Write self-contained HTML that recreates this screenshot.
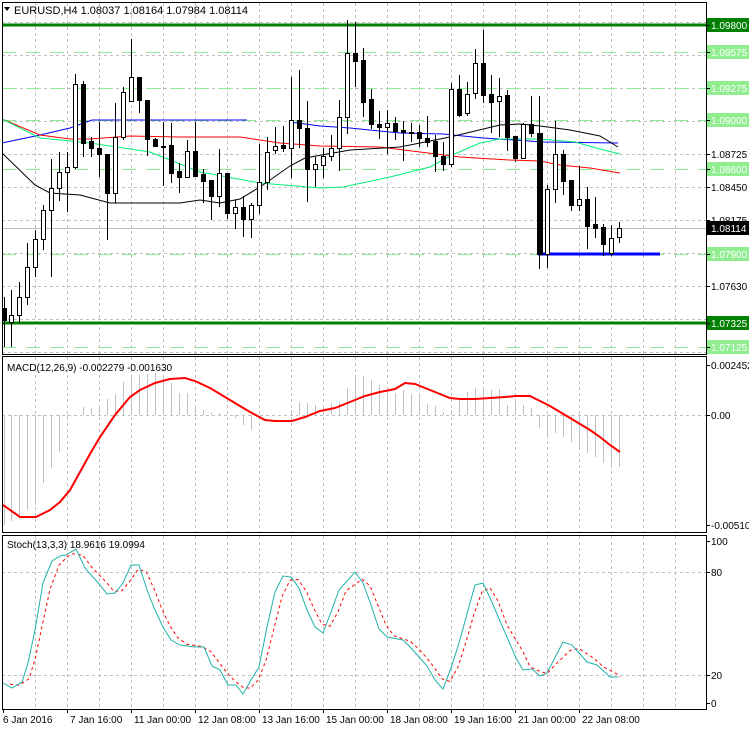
<!DOCTYPE html>
<html><head><meta charset="utf-8"><style>
html,body{margin:0;padding:0;background:#fff;width:749px;height:731px;overflow:hidden}
svg{display:block}
text{font-family:"Liberation Sans",sans-serif;font-size:10px;fill:#000}
</style></head><body>
<svg id="s" width="749" height="731" xmlns="http://www.w3.org/2000/svg">
<rect width="749" height="731" fill="#fff"/>
<g id="grid"></g>
<g id="lines"></g>
<g id="candles"></g>
<g id="ind"></g>
<g id="axis"></g>
<text x="14" y="14" style="font-size:11px">EURUSD,H4  1.08037 1.08164 1.07984 1.08114</text>
<path d="M4 7 L10 7 L7 11 Z" fill="#000"/>
<text x="7" y="371" style="font-size:10px">MACD(12,26,9) -0.002279 -0.001630</text>
<text x="7" y="548" style="font-size:10px">Stoch(13,3,3) 18.9616 19.0994</text>
</svg>
<script>
var NS="http://www.w3.org/2000/svg";
function el(p,t,a){var e=document.createElementNS(NS,t);for(var k in a)e.setAttribute(k,a[k]);document.getElementById(p).appendChild(e);return e;}
function txt(p,x,y,s,fill){var e=el(p,"text",{x:x,y:y});e.textContent=s;if(fill)e.setAttribute("style","fill:"+fill);return e;}
for(var x=35;x<706;x+=32){[[3,354],[357,532],[536,709]].forEach(function(r){el("grid","line",{x1:x+.5,y1:r[0],x2:x+.5,y2:r[1],stroke:"#c0c0c0","stroke-dasharray":"3,3"});});}
[22,55,88,121,154,187,220,253,286,319,352].forEach(function(y){el("grid","line",{x1:2,y1:y+.5,x2:706,y2:y+.5,stroke:"#c0c0c0","stroke-dasharray":"3,3"});});
[415,572,675].forEach(function(y){el("grid","line",{x1:2,y1:y+.5,x2:706,y2:y+.5,stroke:"#c0c0c0","stroke-dasharray":"3,3"});});
[52,88,120,169,254,347].forEach(function(y){el("lines","line",{x1:2,y1:y+.5,x2:706,y2:y+.5,stroke:"#90ee90","stroke-width":1,"stroke-dasharray":"14,10"});});
el("lines","line",{x1:2,y1:228.5,x2:706,y2:228.5,stroke:"#c0c0c0"});
[25,323].forEach(function(y){el("lines","line",{x1:2,y1:y,x2:706,y2:y,stroke:"#008000","stroke-width":3});});
function pl(g,pts,c,w,d){var a={points:pts.map(function(p){return p.join(",")}).join(" "),fill:"none",stroke:c,"stroke-width":w||1};if(d)a["stroke-dasharray"]=d;el(g,"polyline",a);}
pl("lines",[[2,143],[40,135],[70,128],[92,120],[247,120]],"#0000ff");
pl("lines",[[290,122],[320,126],[350,128],[400,133],[443,134],[483,138],[543,142],[618,143]],"#0000ff");
pl("lines",[[2,119],[40,135],[70,139],[90,139],[130,136],[180,137],[240,137],[280,143],[320,146],[380,147],[420,152],[460,157],[510,160],[540,161],[560,165],[590,168],[620,173]],"#ff0000");
pl("lines",[[2,119],[40,138],[90,143],[150,152],[200,172],[260,183],[320,188],[343,187],[390,177],[430,167],[450,156],[480,143],[500,139],[540,139],[575,142],[600,149],[620,154]],"#00ee76");
pl("lines",[[2,153],[35,185],[50,193],[80,195],[110,203],[180,203],[200,200],[220,203],[240,199],[260,187],[290,166],[305,158],[350,150],[400,147],[450,137],[500,125],[520,124],[540,126],[570,130],[600,136],[618,147]],"#000");
el("lines","line",{x1:538,y1:254,x2:660,y2:254,stroke:"#0000ff","stroke-width":3});
var C=[[4,308,320,297,347,0],[11,315,322,290,347,1],[19,297,315,282,323,1],[27,267,297,243,305,1],[35,239,267,230,277,1],[43,210,239,205,250,1],[51,188,210,159,277,1],[59,172,188,152,201,1],[67,167,172,152,212,1],[75,84,167,74,169,1],[83,84,143,81,157,0],[91,141,148,137,157,0],[99,148,154,122,177,0],[107,154,193,154,240,0],[115,137,193,103,203,1],[123,92,137,87,140,1],[131,77,101,39,102,1],[139,77,100,77,113,0],[147,100,139,100,156,0],[155,139,146,138,147,0],[163,146,146,122,186,0],[171,145,173,123,183,0],[179,171,177,163,193,0],[187,151,177,140,177,1],[195,151,176,122,177,0],[203,174,181,169,203,0],[211,180,196,180,220,0],[219,173,196,149,207,1],[227,173,213,173,219,0],[235,207,213,200,229,1],[243,207,219,196,237,0],[251,205,219,203,238,1],[259,182,205,144,214,1],[267,152,182,137,190,1],[275,146,150,127,154,1],[283,145,148,126,152,0],[291,120,148,77,178,1],[299,120,128,70,148,0],[307,128,169,101,202,0],[315,164,169,157,187,1],[323,156,165,148,178,1],[331,148,156,135,161,1],[339,117,148,100,171,1],[347,53,117,20,134,1],[355,53,61,22,87,0],[363,60,102,48,117,0],[371,99,124,89,129,0],[379,124,127,111,139,0],[387,123,127,110,154,1],[395,123,131,117,140,0],[403,130,132,121,161,0],[411,132,133,123,142,0],[419,132,138,125,147,0],[427,138,142,116,147,0],[435,141,156,135,172,0],[443,156,164,142,171,0],[451,89,164,83,167,1],[459,89,115,75,117,0],[467,94,113,82,116,1],[475,63,93,49,99,1],[483,63,95,30,103,0],[491,94,102,75,133,0],[499,96,101,78,137,1],[507,95,137,90,151,0],[515,136,158,136,162,0],[523,124,158,123,159,1],[531,124,133,96,137,0],[539,133,254,96,269,0],[547,189,254,185,268,1],[555,154,189,121,203,1],[563,154,181,150,195,0],[571,180,205,180,211,0],[579,199,205,166,211,1],[587,199,226,187,249,0],[595,224,228,197,238,0],[603,227,244,224,256,0],[611,238,253,225,256,1],[619,228,237,222,243,1]];
C.forEach(function(c){var x=c[0];
el("candles","line",{x1:x+.5,y1:c[3],x2:x+.5,y2:c[4],stroke:"#000"});
var h=Math.max(1,c[2]-c[1]);var w=(x==539)?5:4;
el("candles","rect",{x:x-1.5,y:c[1]+.5,width:w,height:h,fill:c[5]?"#fff":"#000",stroke:"#000"});});
var H=[[4,525],[11,521],[19,515],[27,510],[35,505],[43,483],[51,468],[59,452],[67,420],[83,407],[91,408],[99,405],[107,399],[115,394],[123,382],[131,376],[139,375],[147,374],[155,373],[163,375],[171,383],[179,393],[187,393],[195,405],[203,410],[211,413],[219,413],[235,418],[243,425],[251,430],[267,416],[291,410],[299,402],[307,403],[315,405],[323,405],[331,403],[339,402],[347,388],[355,375],[363,376],[371,380],[379,385],[387,390],[395,393],[403,390],[411,394],[419,396],[427,404],[435,406],[443,412],[451,410],[459,400],[467,392],[475,388],[483,390],[491,390],[499,389],[507,405],[515,400],[523,405],[531,408],[539,428],[547,437],[555,433],[563,437],[571,442],[579,447],[587,453],[595,457],[603,463],[611,467],[619,467]];
H.forEach(function(h){el("ind","line",{x1:h[0]+.5,y1:415,x2:h[0]+.5,y2:h[1],stroke:"#c0c0c0"});});
pl("ind",[[3,505],[20,517],[36,517],[50,510],[60,502],[70,490],[80,472],[90,454],[100,437],[115,415],[130,397],[140,390],[155,383],[170,379],[185,378],[195,381],[210,388],[230,400],[250,412],[265,420],[275,421],[292,421],[305,417],[320,411],[335,408],[350,402],[365,396],[380,392],[395,389],[405,383],[415,384],[430,390],[450,398],[460,399],[475,399],[490,398],[505,397],[516,396],[530,396],[540,401],[550,406],[560,412],[570,418],[580,424],[590,430],[600,437],[610,445],[620,452]],"#ff0000",2);
var S=[[3,683],[12,688],[22,682],[28,663],[35,630],[43,583],[52,561],[60,556],[66,555],[76,549],[85,568],[100,585],[107,594],[115,593],[123,583],[131,565],[139,565],[147,590],[155,610],[163,627],[171,640],[180,645],[195,647],[204,647],[212,666],[220,670],[228,685],[236,685],[243,694],[251,680],[259,667],[267,627],[275,592],[283,576],[291,577],[299,588],[307,610],[315,627],[323,633],[331,612],[339,590],[355,572],[363,583],[371,605],[379,629],[387,637],[403,640],[411,648],[419,657],[427,666],[435,680],[443,689],[451,668],[459,643],[467,614],[475,585],[483,583],[491,600],[500,621],[516,658],[523,670],[532,669],[540,676],[547,673],[563,642],[572,645],[587,662],[597,665],[610,677],[618,677]];
var R=[];for(var i=0;i<S.length;i++){var a=S[Math.max(0,i-1)],b=S[i],c=S[Math.min(S.length-1,i+1)];R.push([Math.min(620,b[0]+7),(a[1]+2*b[1]+c[1])/4]);}
pl("ind",R,"#ff0000",1,"3,3");
pl("ind",S,"#20b2aa",1);
[[2,2,704,352],[2,356,704,176],[2,535,704,174]].forEach(function(r){el("axis","rect",{x:r[0]+.5,y:r[1]+.5,width:r[2],height:r[3],fill:"none",stroke:"#000"});});
function lab(y,s,bg,fg){if(bg)el("axis","rect",{x:707,y:y-7,width:42,height:14,fill:bg});el("axis","line",{x1:706,y1:y+.5,x2:710,y2:y+.5,stroke:"#000"});txt("axis",711,y+4,s,fg);}
lab(154,"1.08725");lab(187,"1.08450");lab(220,"1.08175");lab(286,"1.07630");
lab(25,"1.09800","#008000","#fff");lab(52,"1.09575","#90ee90","#fff");lab(88,"1.09275","#90ee90","#fff");lab(120,"1.09000","#90ee90","#fff");lab(169,"1.08600","#90ee90","#fff");lab(254,"1.07900","#90ee90","#fff");lab(323,"1.07325","#008000","#fff");lab(347,"1.07125","#90ee90","#fff");lab(228,"1.08114","#000","#fff");
lab(365,"0.002452");lab(415,"0.00");lab(525,"-0.005105");
lab(541,"100");lab(572,"80");lab(675,"20");lab(703,"0");
var T=["6 Jan 2016","7 Jan 16:00","11 Jan 00:00","12 Jan 08:00","13 Jan 16:00","15 Jan 00:00","18 Jan 08:00","19 Jan 16:00","21 Jan 00:00","22 Jan 08:00"];
T.forEach(function(s,i){var x=3+64*i;el("axis","line",{x1:x+.5,y1:709,x2:x+.5,y2:713,stroke:"#000"});txt("axis",i==0?3:x+3,723,s);});
</script>
</body></html>
